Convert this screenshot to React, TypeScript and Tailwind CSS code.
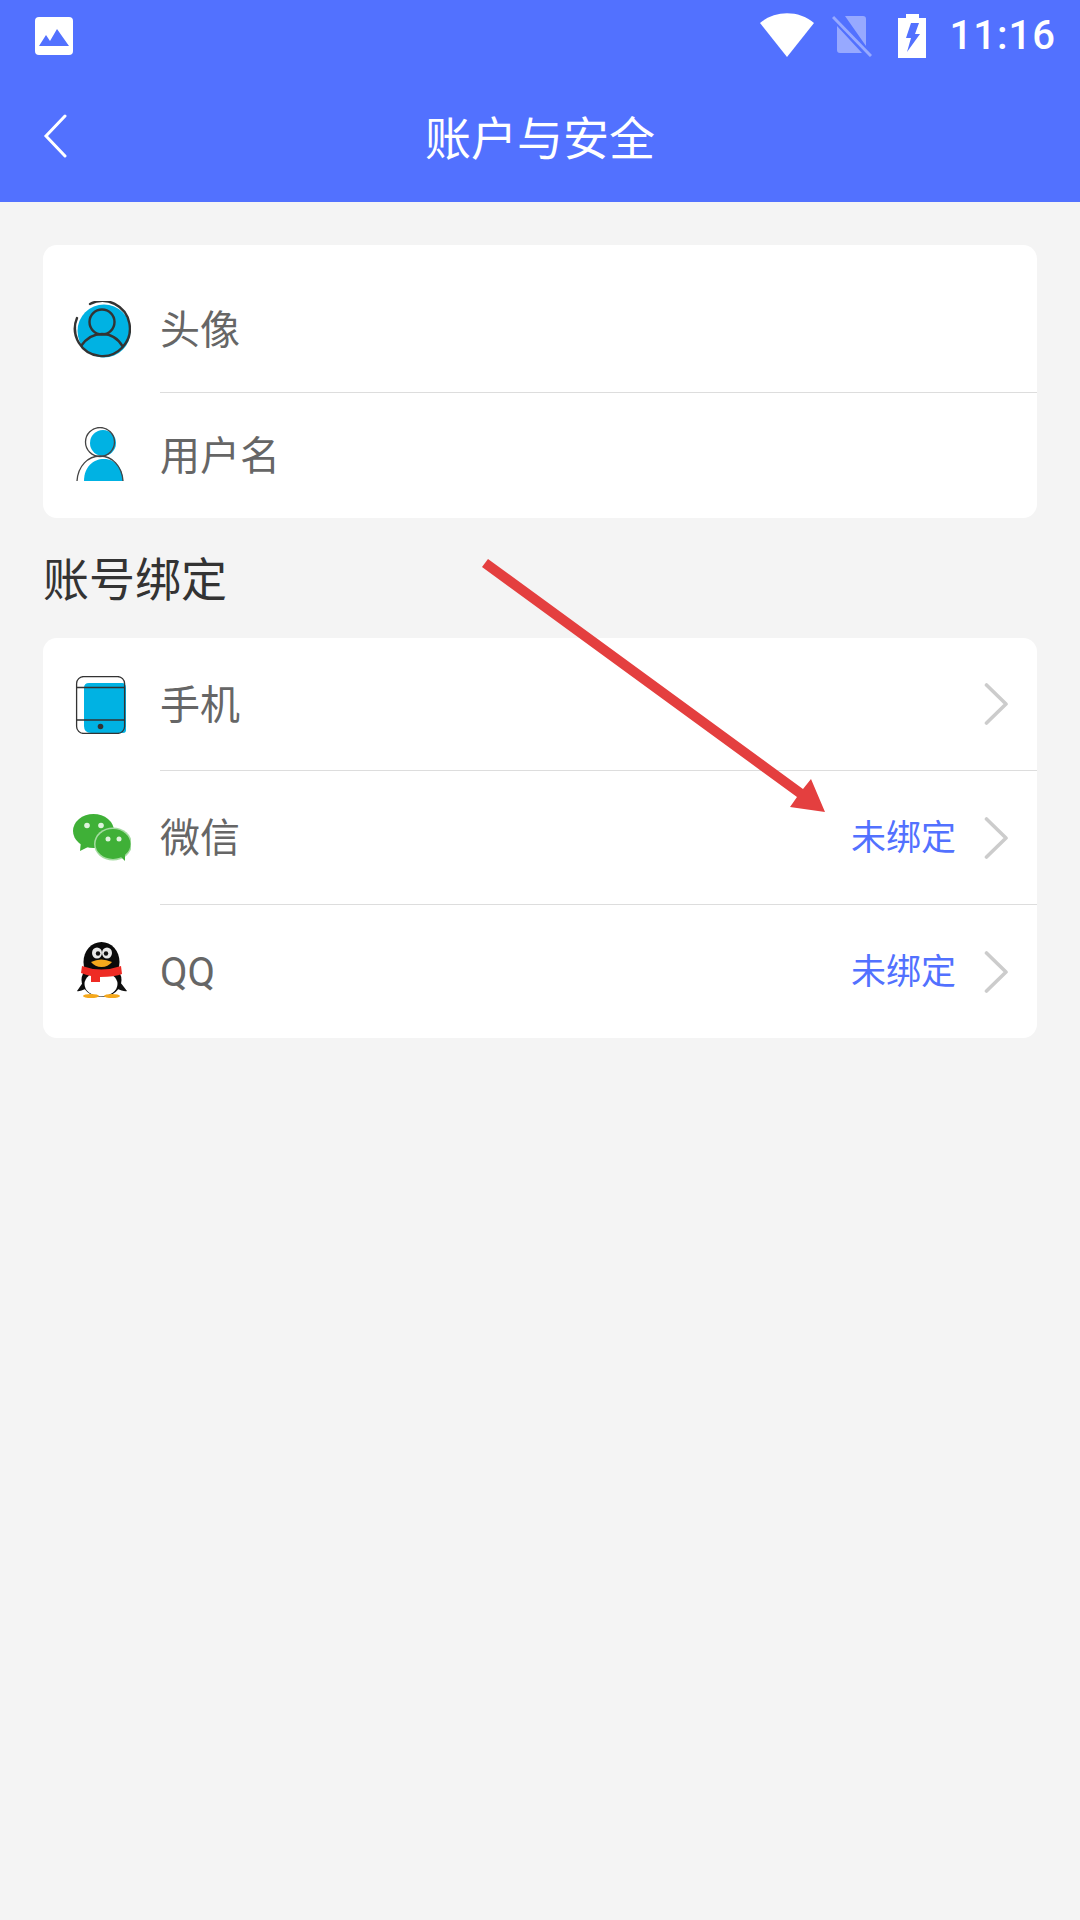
import React from "react";

function ImageIcon() {
	return (
		<svg width="38" height="38" viewBox="0 0 38 38">
			<rect width="38" height="38" rx="4" fill="#fff" />
			<path d="M4 29 L11 18 L15 24 L22 12 L34 29 Z" fill="#5271ff" />
		</svg>
	);
}

function StatusIcons() {
	return (
		<div className="flex items-center">
			<svg width="54" height="44" viewBox="0 0 54 44" className="mr-[18px] -mt-[2px]">
				<path d="M0 10 C15 -3 39 -3 54 10 L27 44 Z" fill="#fff" />
			</svg>
			<svg width="40" height="42" viewBox="0 0 40 42" className="mr-[26px]">
				<path d="M13 1 H31 Q34 1 34 4 V31 Z M5 11 L30 38 H8 Q5 38 5 35 Z" fill="#fff" opacity="0.4" />
				<path d="M1 2 L39 41" stroke="#fff" strokeWidth="3" opacity="0.4" />
			</svg>
			<svg width="28" height="44" viewBox="0 0 28 44" className="mr-[24px]">
				<path
					fillRule="evenodd"
					d="M8 0 H21 V4 H28 V44 H0 V4 H8 Z M13 9 H21 L17 20 H22 L9 38 L13 24 H8 Z"
					fill="#fff"
				/>
			</svg>
		</div>
	);
}

function AvatarIcon() {
	return (
		<svg width="58" height="58" viewBox="0 0 58 58">
			<circle cx="31" cy="30" r="26.5" fill="#00b2e3" />
			<g fill="none" stroke="#333" strokeWidth="2.4">
				<path d="M17 3 A27.5 27.5 0 1 1 4 17 M2 26 A27 27 0 0 0 4 38" strokeLinecap="round" />
				<path d="M8 45 C15 35 22 33 29 33 C37 33 45 37 50 46" />
				<circle cx="29" cy="21" r="12.5" />
			</g>
		</svg>
	);
}

function UserIcon() {
	return (
		<svg width="58" height="58" viewBox="0 0 58 58">
			<circle cx="30" cy="16" r="13" fill="#00b2e3" />
			<path d="M11 54 C11 40 20 32 31 32 C43 32 50 42 50 54 Z" fill="#00b2e3" />
			<g fill="none" stroke="#444" strokeWidth="1.3">
				<circle cx="27" cy="15" r="14.5" />
				<path d="M4 54 C5 39 15 29 27 29 C39 29 49 39 50 54" />
			</g>
		</svg>
	);
}

function PhoneIcon() {
	return (
		<svg width="58" height="58" viewBox="0 0 58 58">
			<path d="M11 12 Q11 7 16 7 H49 Q53 7 53 12 V54 Q53 57 50 57 H18 Q11 57 11 50 Z" fill="#00b2e3" />
			<rect x="3.6" y="0.6" width="48" height="56.8" rx="7" fill="none" stroke="#333" strokeWidth="1.3" />
			<path d="M3 11.5 H52 M3 44 H52" stroke="#333" strokeWidth="1.5" />
			<circle cx="27.5" cy="50.5" r="2.8" fill="#333" />
		</svg>
	);
}

function WechatIcon() {
	return (
		<svg width="58" height="48" viewBox="0 0 58 48">
			<ellipse cx="20.5" cy="17" rx="20.5" ry="17" fill="#3fb037" />
			<path d="M8 27 L7 37 L17 32 Z" fill="#3fb037" />
			<ellipse cx="40" cy="30" rx="19" ry="16.5" fill="#a5dca1" />
			<ellipse cx="40" cy="30" rx="17.5" ry="15" fill="#3fb037" />
			<path d="M46 41 L52 47 L52 37 Z" fill="#3fb037" />
			<circle cx="14" cy="11.5" r="2.8" fill="#dff3dd" />
			<circle cx="28" cy="11.5" r="2.8" fill="#dff3dd" />
			<circle cx="35" cy="25" r="2.5" fill="#dff3dd" />
			<circle cx="46" cy="25" r="2.5" fill="#dff3dd" />
		</svg>
	);
}

function QQIcon() {
	return (
		<svg width="50" height="56" viewBox="0 0 50 56" className="-mt-[4px]">
			<path d="M9 36 L0 49 Q2 50 10 46 Z M40 36 L50 49 Q47 50 39 46 Z" fill="#111" />
			<ellipse cx="24.5" cy="20" rx="18" ry="20" fill="#0a0a0a" />
			<ellipse cx="24.5" cy="38" rx="20" ry="17" fill="#0a0a0a" />
			<ellipse cx="24" cy="42" rx="16.5" ry="12.5" fill="#fff" />
			<ellipse cx="14" cy="54" rx="8" ry="2" fill="#f5a81c" />
			<ellipse cx="35" cy="54" rx="8" ry="2" fill="#f5a81c" />
			<ellipse cx="20" cy="11" rx="5" ry="5.5" fill="#e8e8e8" />
			<ellipse cx="30" cy="11" rx="5" ry="5.5" fill="#e8e8e8" />
			<circle cx="21" cy="11.5" r="2.2" fill="#111" />
			<circle cx="29" cy="11.5" r="2.2" fill="#111" />
			<path d="M14 20 Q24 15 35 20 Q31 25 24.5 25 Q18 25 14 20 Z" fill="#f5a81c" />
			<path d="M5 24 Q24 31 44 24 L45 32 Q38 35 23 35 V40 H14 V34 Q9 33 4 31 Z" fill="#ee2b24" />
		</svg>
	);
}

function Chevron() {
	return (
		<svg width="24" height="42" viewBox="0 0 24 42">
			<path d="M2.5 2 L22 21 L2.5 40" fill="none" stroke="#cccccc" strokeWidth="3.6" strokeLinecap="round" strokeLinejoin="round" />
		</svg>
	);
}

type RowProps = {
	icon: React.ReactNode;
	label: string;
	status?: string;
	arrow?: boolean;
	className: string;
	divider?: boolean;
};

function Row({ icon, label, status, arrow, className, divider }: RowProps) {
	return (
		<div className={`flex items-center ${className}`}>
			<div className="w-[58px] ml-[30px] flex justify-center shrink-0">{icon}</div>
			<div className={`ml-[29px] flex-1 self-stretch flex items-center pr-[29px] ${divider ? "border-b-[1px] border-[#dddddd]" : ""}`}>
				<span className="text-[40px] leading-none text-[#666666] flex-1 pt-[3px]">{label}</span>
				{status && <span className="text-[35px] leading-none text-[#5271ff] mr-[28px] pt-[2px]">{status}</span>}
				{arrow && <Chevron />}
			</div>
		</div>
	);
}

export default function App() {
	return (
		<div className="relative w-[1080px] min-h-[1920px] bg-[#f4f4f4] font-[Roboto,'Noto_Sans_CJK_SC',sans-serif]">
			<header className="h-[202px] bg-[#5271ff] text-white">
				<div className="h-[72px] flex items-center justify-between pl-[35px] pr-[24px]">
					<ImageIcon />
					<div className="flex items-center">
						<StatusIcons />
						<span className="text-[40px] font-medium tracking-[1px] leading-none">11:16</span>
					</div>
				</div>
				<div className="h-[130px] flex items-center justify-between pl-[43px] pr-[43px] pb-[2px]">
					<svg width="24" height="44" viewBox="0 0 24 44">
						<path d="M22 2 L3 22 L22 42" fill="none" stroke="#fff" strokeWidth="3" strokeLinecap="round" />
					</svg>
					<h1 className="text-[46px] font-normal leading-none pt-[6px]">账户与安全</h1>
					<div className="w-[24px]" />
				</div>
			</header>

			<main className="px-[43px] pt-[43px]">
				<section className="bg-white rounded-[14px]">
					<Row icon={<AvatarIcon />} label="头像" className="h-[148px] pt-[22px]" divider />
					<Row icon={<UserIcon />} label="用户名" className="h-[125px]" />
				</section>

				<h2 className="h-[120px] flex items-center text-[46px] font-normal leading-none text-[#333333] pt-[4px]">账号绑定</h2>

				<section className="bg-white rounded-[14px]">
					<Row icon={<PhoneIcon />} label="手机" arrow className="h-[133px]" divider />
					<Row icon={<WechatIcon />} label="微信" status="未绑定" arrow className="h-[134px]" divider />
					<Row icon={<QQIcon />} label="QQ" status="未绑定" arrow className="h-[133px]" />
				</section>
			</main>

			<svg className="absolute left-0 top-0 pointer-events-none" width="1080" height="900" viewBox="0 0 1080 900">
				<path d="M482 567 L488 559 L803 789 L811 779 L825 812 L790 807 L797 797 Z" fill="#e43f3f" />
			</svg>
		</div>
	);
}
